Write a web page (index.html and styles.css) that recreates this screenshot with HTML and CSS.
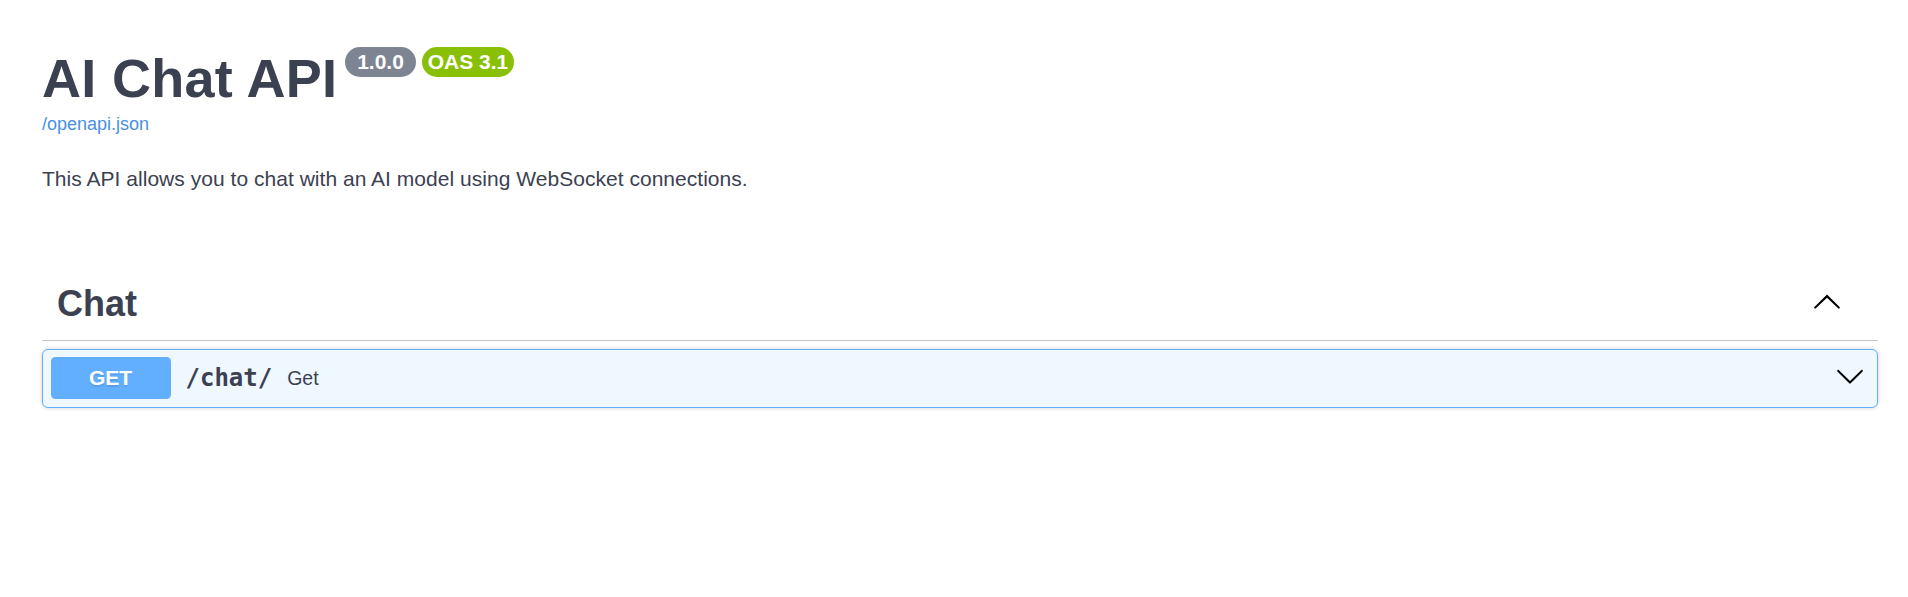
FILE: index.html
```html
<!DOCTYPE html>
<html lang="en">
<head>
<meta charset="utf-8">
<title>AI Chat API - Swagger UI</title>
<link rel="stylesheet" href="styles.css">
</head>
<body>
<div class="swagger-ui">
  <div class="wrapper">
    <section class="info">
      <hgroup class="main">
        <h2 class="title"><span class="title-text">AI Chat API</span><span class="stamps"><small class="stamp stamp-version"><pre class="version"> 1.0.0 </pre></small><small class="stamp stamp-oas"><pre class="version">OAS 3.1</pre></small></span></h2>
        <div class="base"><a class="link" href="#"><span class="url">/openapi.json</span></a></div>
      </hgroup>
      <div class="description">
        <p>This API allows you to chat with an AI model using WebSocket connections.</p>
      </div>
    </section>

    <section class="operations">
      <div class="tag-section">
        <h3 class="opblock-tag">
          <span class="tag-name">Chat</span>
          <button class="expand-operation" aria-label="Collapse operation">
            <svg class="arrow arrow-up" viewBox="0 0 20 20" width="30" height="30" aria-hidden="true">
              <path transform="matrix(1 0 0 -1 0 21)" d="M17.418 6.109c.272-.268.709-.268.979 0s.271.701 0 .969l-7.908 7.83c-.27.268-.707.268-.979 0l-7.908-7.83c-.27-.268-.27-.701 0-.969.271-.268.709-.268.979 0L10 13.25l7.418-7.141z"/>
            </svg>
          </button>
        </h3>
        <div class="opblock opblock-get">
          <div class="opblock-summary">
            <span class="method">GET</span>
            <span class="path">/chat/</span>
            <span class="summary-desc">Get</span>
            <button class="control-arrow" aria-label="Expand operation">
              <svg class="arrow arrow-down" viewBox="0 0 20 20" width="30" height="30" aria-hidden="true">
                <path d="M17.418 6.109c.272-.268.709-.268.979 0s.271.701 0 .969l-7.908 7.83c-.27.268-.707.268-.979 0l-7.908-7.83c-.27-.268-.27-.701 0-.969.271-.268.709-.268.979 0L10 13.25l7.418-7.141z"/>
              </svg>
            </button>
          </div>
        </div>
      </div>
    </section>
  </div>
</div>
</body>
</html>
```

FILE: styles.css
```css
* {
  box-sizing: border-box;
}

body {
  margin: 0;
  background: #ffffff;
  font-family: "Liberation Sans", Arial, sans-serif;
  color: #3b4151;
}

.wrapper {
  padding: 47px 30px 0 42px;
}

/* ---------- info ---------- */
.title {
  margin: 0;
  font-size: 54px;
  font-weight: 700;
  line-height: normal;
  color: #3b4151;
}

.title-text {
  letter-spacing: 0.3px;
}

.stamp {
  display: inline-block;
  position: relative;
  top: -9.5px;
  margin-left: 8px;
  padding: 3px 6px;
  vertical-align: super;
  border-radius: 86px;
  background: #7d8492;
  font-size: 15px;
}

.stamp-oas {
  margin-left: 6px;
  background: #89bf04;
}

.version {
  margin: 0;
  padding: 0;
  font-family: "Liberation Sans", Arial, sans-serif;
  font-size: 21px;
  font-weight: 700;
  line-height: normal;
  color: #ffffff;
}

.base {
  margin-top: 4.5px;
  font-size: 18px;
  line-height: normal;
}

.link {
  color: #4990e2;
  text-decoration: none;
}

.description p {
  margin: 32px 0 0;
  font-size: 21px;
  line-height: normal;
  letter-spacing: 0.03px;
  color: #3b4151;
}

/* ---------- operations ---------- */
.operations {
  margin-top: 77.5px;
}

.opblock-tag {
  display: flex;
  align-items: center;
  margin: 0 0 7.5px;
  padding: 15px 30px 15px 15px;
  border-bottom: 1px solid #c4c5cb;
  font-size: 36px;
  font-weight: 700;
  line-height: normal;
  color: #3b4151;
}

.tag-name {
  flex: 1 1 auto;
}

.expand-operation,
.control-arrow {
  display: flex;
  align-items: center;
  padding: 0;
  border: none;
  background: none;
  cursor: pointer;
}

.arrow {
  display: block;
  fill: #000000;
}

.arrow-up {
  margin: 0 6px 6px 0;
}

.arrow-down {
  margin: 0 5px 5px 0;
}

.opblock {
  margin: 0 0 22.5px;
  border: 1px solid #61affe;
  border-radius: 6px;
  background: #eff7ff;
  box-shadow: 0 0 4px rgba(0, 0, 0, 0.19);
}

.opblock-summary {
  display: flex;
  align-items: center;
  padding: 7.5px;
}

.method {
  min-width: 120px;
  padding: 9px 0;
  border-radius: 4.5px;
  background: #61affe;
  color: #ffffff;
  font-size: 21px;
  font-weight: 700;
  line-height: normal;
  text-align: center;
  text-shadow: 0 1.5px 0 rgba(0, 0, 0, 0.1);
}

.path {
  padding: 0 15px;
  font-family: "DejaVu Sans Mono", monospace;
  font-size: 24px;
  font-weight: 700;
  color: #3b4151;
}

.summary-desc {
  flex: 1 1 auto;
  font-size: 19.5px;
  color: #3b4151;
}
```
